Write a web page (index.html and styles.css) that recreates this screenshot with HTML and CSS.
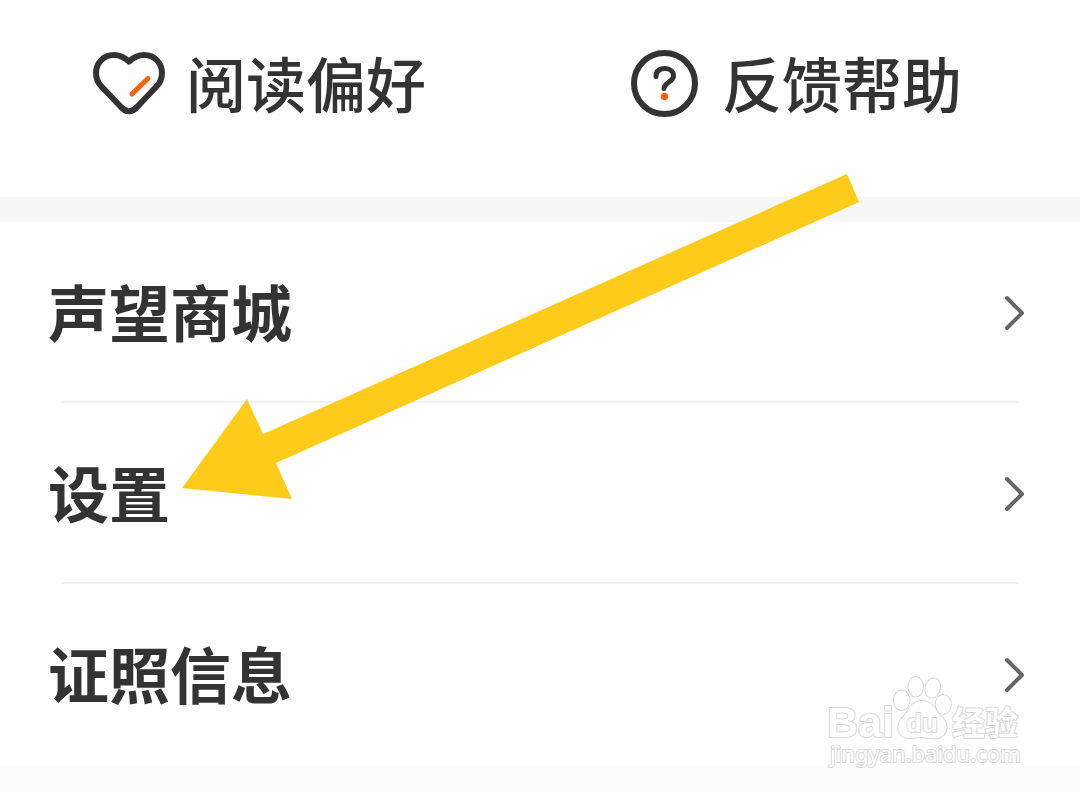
FILE: index.html
```html
<!DOCTYPE html>
<html lang="zh-CN">
<head>
<meta charset="utf-8">
<meta name="viewport" content="width=device-width, initial-scale=1">
<title>设置</title>
<link rel="stylesheet" href="styles.css">
</head>
<body>
<main class="page">
  <nav class="shortcuts">
    <a class="shortcut" href="#preferences">
      <svg class="shortcut-icon" viewBox="0 0 74 74" aria-hidden="true">
        <path class="stroke-dark" d="M37 16.500C32 12 27 10 22 10C11 10 4 18.500 4 28C4 33.500 6 38 9.500 41.500L29 62C33.500 67.500 40.500 67.500 45 62L64.500 41.500C68 38 70 33.500 70 28C70 18.500 63 10 52 10C47 10 42 12 37 16.500Z"/>
        <path class="stroke-orange" d="M40 49L56 33.500"/>
      </svg>
      <span>阅读偏好</span>
    </a>
    <a class="shortcut" href="#help">
      <svg class="shortcut-icon" viewBox="0 0 74 74" aria-hidden="true">
        <circle class="stroke-dark" cx="36.500" cy="38.500" r="30.500"/>
        <path class="stroke-question" d="M28 31.500C28 26 31 23.500 37 23.500C42 23.500 45.500 26.500 45.500 31C45.500 37 36.500 37 36 43.500"/>
        <circle class="dot" cx="36.500" cy="51.500" r="3.700"/>
      </svg>
      <span>反馈帮助</span>
    </a>
  </nav>
  <nav class="menu">
    <a class="row" href="#mall">
      <span>声望商城</span>
      <svg class="chevron" viewBox="0 0 24 36" aria-hidden="true"><path d="M4 3L19 18L4 33"/></svg>
    </a>
    <a class="row" href="#settings">
      <span>设置</span>
      <svg class="chevron" viewBox="0 0 24 36" aria-hidden="true"><path d="M4 3L19 18L4 33"/></svg>
    </a>
    <a class="row" href="#license">
      <span>证照信息</span>
      <svg class="chevron" viewBox="0 0 24 36" aria-hidden="true"><path d="M4 3L19 18L4 33"/></svg>
    </a>
  </nav>
  <svg class="arrow" viewBox="0 0 677 326" aria-hidden="true">
    <path d="M0 314L65 225L81 260L665 0L677 28L94 289L110 325Z"/>
  </svg>
  <svg class="watermark" viewBox="0 0 204 100" role="img" aria-label="Baidu 经验">
    <g class="outline">
      <text class="brand" x="3" y="65">Bai</text>
      <ellipse cx="77.700" cy="28.300" rx="7.800" ry="9.700"/>
      <ellipse cx="91.700" cy="14.700" rx="7.200" ry="9.700"/>
      <ellipse cx="108.700" cy="16" rx="7.200" ry="9.700" transform="rotate(14 108.700 16)"/>
      <ellipse cx="119.300" cy="32.500" rx="7.600" ry="9.500"/>
      <path d="M84 38C88 31 93 29 98 29C104 29 109 32 112 38C115 44 122 47 122.500 54C123 62 117 66.500 110 66.500C105 66.500 101 65 97 65C93 65 90 66 85 66C77 66 73.500 60 74.500 54C75.500 46 81 45 84 38Z"/>
      <text class="paw-text" x="82" y="60">du</text>
      <text class="brand-cn" x="128" y="63">经验</text>
      <text class="site" x="6" y="90">jingyan.baidu.com</text>
    </g>
  </svg>
</main>
</body>
</html>
```
FILE: styles.css
```css
* {
  box-sizing: border-box;
}

body {
  margin: 0;
  background: #fcfcfc;
  color: #333;
  font-family: "Noto Sans CJK SC", sans-serif;
}

a {
  color: inherit;
  text-decoration: none;
}

.page {
  position: relative;
  min-height: 100vh;
  overflow: hidden;
}

.shortcuts {
  display: grid;
  grid-template-columns: 1fr 1fr;
  padding: 37px 8px 70px 0;
  background: #fefefe;
  border-bottom: 25px solid #f7f7f7;
}

.shortcut {
  display: flex;
  align-items: center;
  gap: 20px;
  padding-left: 92px;
  font-size: 60px;
  font-weight: 500;
  line-height: 90px;
  white-space: nowrap;
}

.shortcut-icon {
  width: 74px;
  height: 74px;
  flex: none;
}

.stroke-dark,
.stroke-orange,
.stroke-question {
  fill: none;
  stroke: #333;
  stroke-width: 6;
  stroke-linecap: round;
  stroke-linejoin: round;
}

.stroke-orange {
  stroke: #ff600a;
  stroke-width: 5;
}

.stroke-question {
  stroke-width: 5;
}

.dot {
  fill: #ff600a;
}

.menu {
  padding-bottom: 1px;
  background: #fefefe;
}

.row {
  position: relative;
  display: flex;
  align-items: center;
  justify-content: space-between;
  height: 181px;
  padding: 0 53px 0 48px;
  font-size: 61px;
  font-weight: 700;
  line-height: 88px;
}

.row span {
  padding-bottom: 4px;
}

.row:not(:last-child)::after {
  content: "";
  position: absolute;
  right: 61px;
  bottom: 0;
  left: 61px;
  height: 2px;
  background: #f1f1f1;
}

.chevron {
  width: 24px;
  height: 36px;
  fill: none;
  stroke: #666;
  stroke-width: 4;
  stroke-linecap: round;
  stroke-linejoin: round;
}

.arrow {
  position: absolute;
  top: 174px;
  left: 182px;
  width: 677px;
  height: 326px;
  fill: #ffcb1b;
  pointer-events: none;
}

.watermark {
  position: absolute;
  top: 672px;
  right: 52px;
  width: 204px;
  height: 100px;
  pointer-events: none;
}

.outline {
  fill: #fefefe;
  stroke: #d8d8d8;
  stroke-width: 2;
  paint-order: stroke;
  stroke-linejoin: round;
}

.brand,
.paw-text {
  font-family: "Liberation Sans", Arial, sans-serif;
  font-weight: 700;
}

.brand {
  font-size: 43px;
}

.paw-text {
  font-size: 26px;
}

.brand-cn {
  font-size: 33px;
  font-weight: 700;
}

.site {
  font-family: "Noto Sans", sans-serif;
  font-size: 22px;
}
```
